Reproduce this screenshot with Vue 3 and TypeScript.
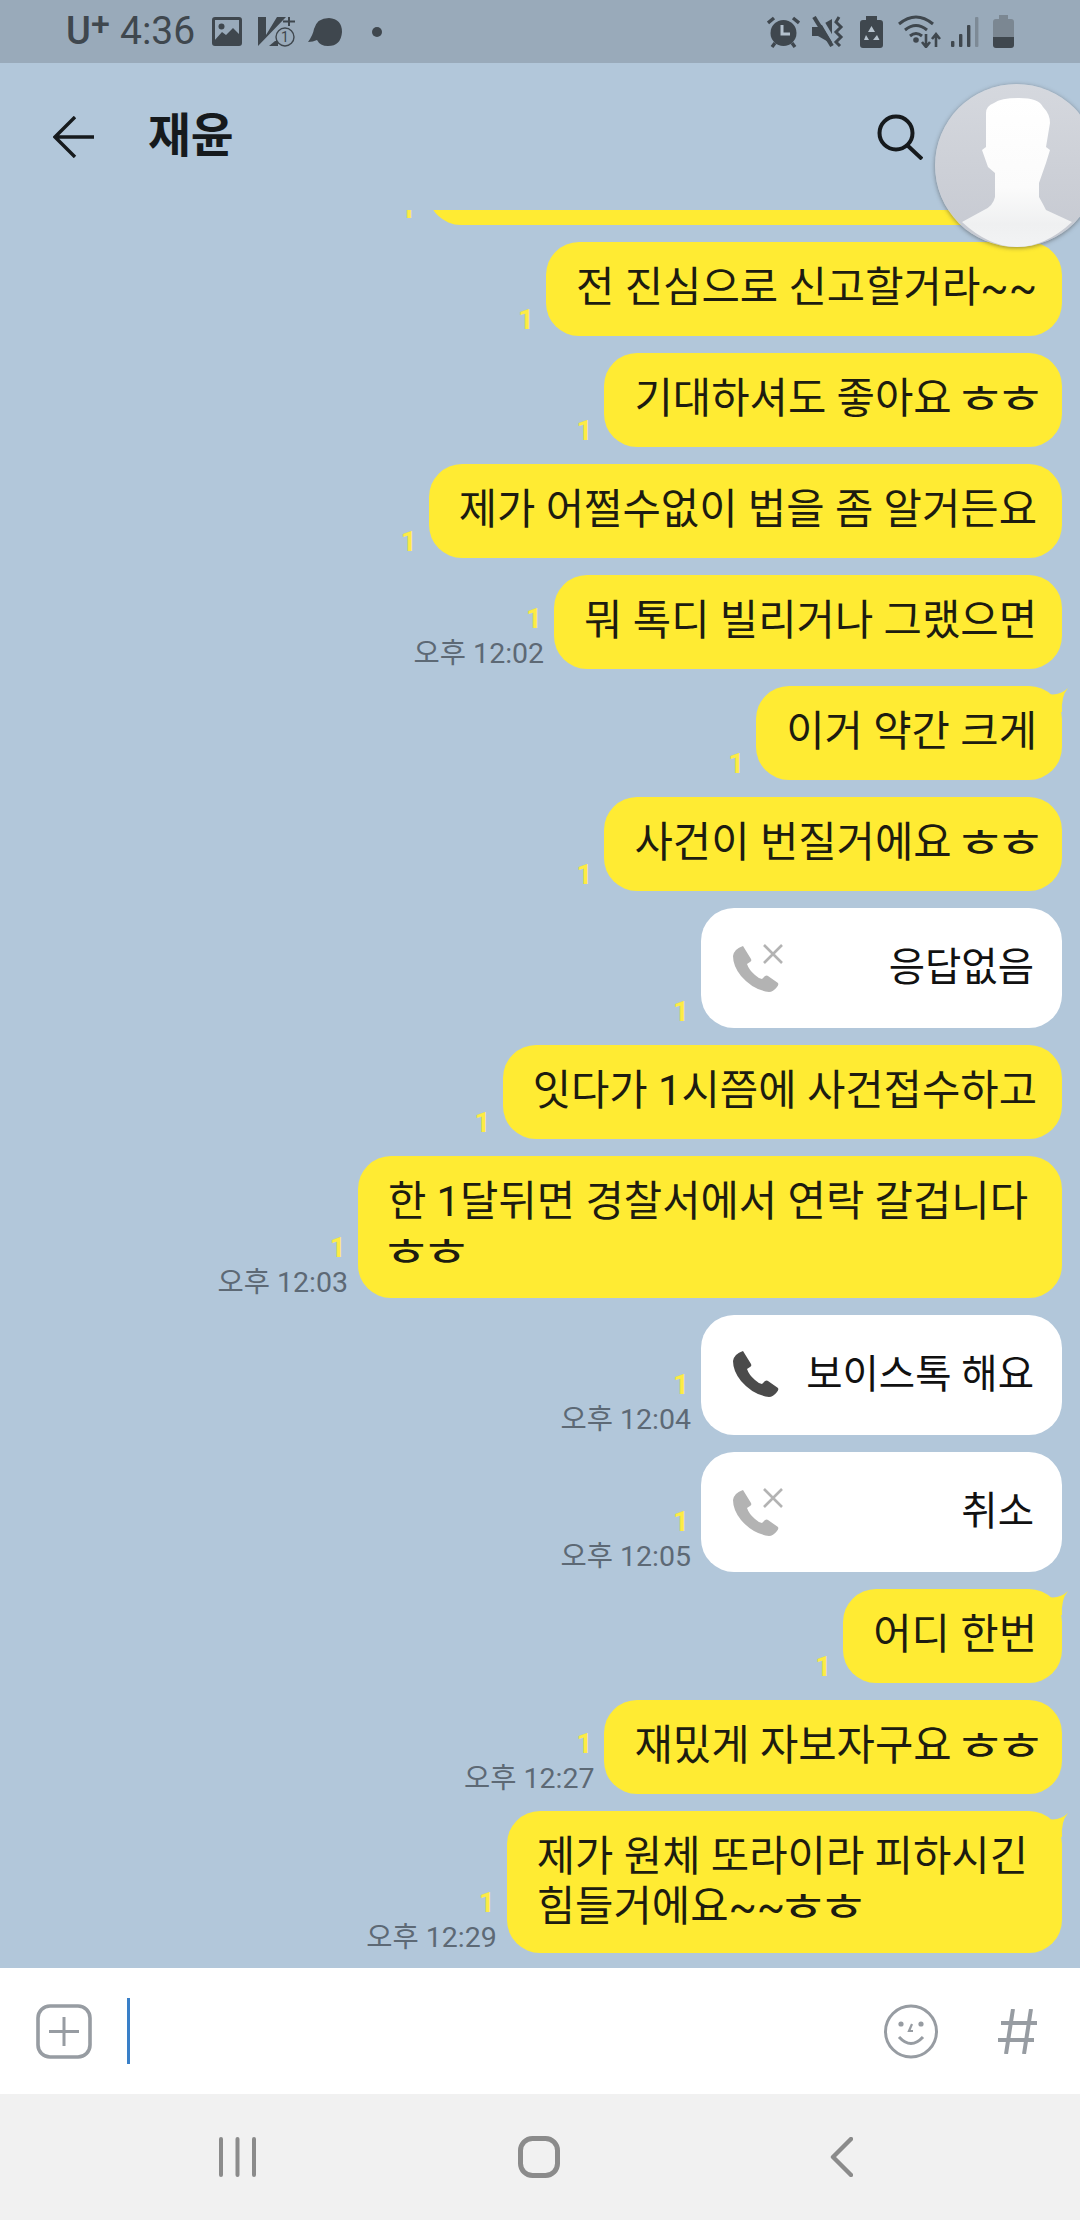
<script setup lang="ts">
interface Message {
  text: string
  kind?: 'call' | 'missed'
  time?: string
  tail?: boolean
  clipped?: boolean
}

const messages: Message[] = [
  { text: '', clipped: true },
  { text: '전 진심으로 신고할거라~~' },
  { text: '기대하셔도 좋아요 ㅎㅎ' },
  { text: '제가 어쩔수없이 법을 좀 알거든요' },
  { text: '뭐 톡디 빌리거나 그랬으면', time: '오후 12:02' },
  { text: '이거 약간 크게', tail: true },
  { text: '사건이 번질거에요 ㅎㅎ' },
  { text: '응답없음', kind: 'missed' },
  { text: '잇다가 1시쯤에 사건접수하고' },
  { text: '한 1달뒤면 경찰서에서 연락 갈겁니다\nㅎㅎ', time: '오후 12:03' },
  { text: '보이스톡 해요', kind: 'call', time: '오후 12:04' },
  { text: '취소', kind: 'missed', time: '오후 12:05' },
  { text: '어디 한번', tail: true },
  { text: '재밌게 자보자구요 ㅎㅎ', time: '오후 12:27' },
  { text: '제가 원체 또라이라 피하시긴\n힘들거에요~~ㅎㅎ', time: '오후 12:29', tail: true },
]

// the ㅎㅎ pair is flatter and wider on the phone, so it gets its own span
const splitLaugh = (text: string) => text.split(/(ㅎㅎ)/).filter(Boolean)

const phonePath =
  'M10 0 L18 13 Q19 15 17 16 L14 18 Q16 24 22 29 Q25 32 29 33 L32 30 Q34 29 35 30 L45 37 Q46 39 44 41 Q40 46 36 46 Q20 44 8 30 Q0 20 0 10 Q1 3 10 0 Z'
</script>

<template>
  <div class="page">
    <div class="status">
      <span class="carrier">U<sup>+</sup></span>
      <span class="clock">4:36</span>
      <svg class="ic-image" width="30" height="29" viewBox="0 0 30 29">
        <rect x="1.5" y="1.5" width="27" height="26" rx="1.5" fill="none" stroke="#3f474e" stroke-width="3" />
        <circle cx="9.5" cy="9.5" r="3" fill="#3f474e" />
        <path d="M2 24 L10 15 L14 18 L21 11 L28 18 V28 H2 Z" fill="#3f474e" />
      </svg>
      <svg class="ic-volte" width="37" height="30" viewBox="0 0 37 30">
        <path d="M0 0 H8 V18 L19 0 H28 L0 29 Z" fill="#3f474e" />
        <path d="M11 29 L17 24 H20 V29 Z" fill="#3f474e" />
        <path d="M31 0 V9 M25 4.5 H37" stroke="#3f474e" stroke-width="2" fill="none" />
        <circle cx="27" cy="20" r="9" fill="#99aaba" stroke="#3f474e" stroke-width="1.4" />
        <text x="27" y="25" text-anchor="middle" class="ic-num">1</text>
      </svg>
      <svg class="ic-talk" width="34" height="28" viewBox="0 0 34 28">
        <path d="M0 24 Q5 17 6 11 Q9 0 21 0 Q34 1 34 14 Q33 28 20 28 Q12 28 9 22 Q5 24 0 24 Z" fill="#3f474e" />
      </svg>
      <i class="status-dot"></i>

      <svg class="ic-alarm" width="33" height="32" viewBox="0 0 33 32">
        <circle cx="16.5" cy="17" r="13" fill="#3f474e" />
        <path d="M15 9 V18 H23" fill="none" stroke="#b4c1cd" stroke-width="3" />
        <path d="M1 7 L7 2 M32 7 L26 2 M5 31 L8 27 M28 31 L25 27" stroke="#3f474e" stroke-width="3.4" fill="none" />
      </svg>
      <svg class="ic-mute" width="32" height="31" viewBox="0 0 32 31">
        <path d="M0 11 H6 L20 3 V28 L6 20 H0 Z" fill="#3f474e" />
        <path d="M7 0 L24 29" stroke="#99aaba" stroke-width="4" />
        <path d="M2 1 L20 30" stroke="#3f474e" stroke-width="4" />
        <path d="M27 1 L24 6 L29 11 L24 16 L29 21 L24 26 L28 30" fill="none" stroke="#3f474e" stroke-width="3" />
      </svg>
      <svg class="ic-saver" width="23" height="32" viewBox="0 0 23 32">
        <path d="M6 0 H17 V4 H20 Q23 4 23 7 V29 Q23 32 20 32 H3 Q0 32 0 29 V7 Q0 4 3 4 H6 Z" fill="#3f474e" />
        <path d="M11.5 10 L15 16 H8 Z M6 19 L9 24 H4 Z M17 19 L19.5 24 H13 Z" fill="#b6c2cd" />
      </svg>
      <svg class="ic-wifi" width="43" height="33" viewBox="0 0 43 33">
        <path d="M1 9 Q18 -5 35 9 M7 15 Q18 6 29 15 M12 21 Q18 16 24 21" fill="none" stroke="#3f474e" stroke-width="3" />
        <circle cx="18" cy="25" r="2.8" fill="#3f474e" />
        <path d="M28 19 V31 M24 27 L28 32 L32 27 M38 32 V20 M34 24 L38 19 L42 24" fill="none" stroke="#3f474e" stroke-width="2.6" />
      </svg>
      <svg class="ic-signal" width="28" height="30" viewBox="0 0 28 30">
        <rect x="0" y="24" width="3.4" height="6" rx="1" fill="#3f474e" />
        <rect x="8" y="17" width="3.4" height="13" rx="1" fill="#3f474e" />
        <rect x="16" y="8" width="3.4" height="22" rx="1" fill="#3f474e" />
        <rect x="24" y="0" width="3.4" height="30" rx="1" fill="#7d8a96" />
      </svg>
      <svg class="ic-battery" width="21" height="33" viewBox="0 0 21 33">
        <path d="M6 0 H15 V4 H18 Q21 4 21 7 V22 H0 V7 Q0 4 3 4 H6 Z" fill="#7b8792" />
        <path d="M0 22 H21 V30 Q21 33 18 33 H3 Q0 33 0 30 Z" fill="#3f474e" />
      </svg>
    </div>

    <header class="header">
      <svg class="back" width="42" height="42" viewBox="0 0 42 42">
        <path d="M41 21 H2 M22 1 L2 21 L22 41" fill="none" stroke="#161a1d" stroke-width="3.4" />
      </svg>
      <h1 class="title">재윤</h1>
      <svg class="search" width="46" height="46" viewBox="0 0 46 46">
        <circle cx="19" cy="19" r="16.5" fill="none" stroke="#161a1d" stroke-width="4" />
        <path d="M30 31 L45 45" stroke="#161a1d" stroke-width="4" />
      </svg>
    </header>

    <!-- floating head over the chat -->
    <div class="avatar">
      <svg width="163" height="163" viewBox="0 0 163 163">
        <defs>
          <linearGradient id="avatarBg" x1="0" y1="0" x2="0" y2="1">
            <stop offset="0" stop-color="#d5d8de" />
            <stop offset="1" stop-color="#c6c9d1" />
          </linearGradient>
          <linearGradient id="avatarHead" x1="0" y1="0" x2="0" y2="1">
            <stop offset="0" stop-color="#ffffff" />
            <stop offset="0.6" stop-color="#fbfbfb" />
            <stop offset="0.85" stop-color="#eff0f1" />
            <stop offset="1" stop-color="#f2f3f4" />
          </linearGradient>
        </defs>
        <circle cx="81.5" cy="81.5" r="81.5" fill="url(#avatarBg)" />
        <path
          d="M59 19 Q66 14 84 14 Q104 14 108 23 Q115 30 115 39 L111 63 L115 66 L111 79 L104 99 L104 113 Q108 120 111 126 L137 138 Q110 163 82 163 Q54 163 27 138 L49 126 Q58 122 60 113 L60 89 L53 83 L47 66 L51 63 L51 29 Q51 22 59 19 Z"
          fill="url(#avatarHead)"
        />
      </svg>
    </div>

    <main class="chat">
      <div v-for="(msg, i) in messages" :key="i" class="row" :class="{ 'row-clipped': msg.clipped }">
        <div class="meta">
          <span class="receipt">1</span>
          <span v-if="msg.time" class="time">{{ msg.time }}</span>
        </div>
        <div v-if="msg.kind" class="bubble call">
          <svg class="phone" width="50" height="48" viewBox="0 0 50 48">
            <g v-if="msg.kind === 'missed'" transform="translate(0 2)">
              <path :d="phonePath" fill="#b3b3b3" />
            </g>
            <path v-if="msg.kind === 'missed'" d="M31 1 L49 19 M49 1 L31 19" stroke="#b3b3b3" stroke-width="2.6" fill="none" />
            <path v-else :d="phonePath" fill="#4b4b4b" />
          </svg>
          <span>{{ msg.text }}</span>
        </div>
        <div v-else class="bubble" :class="{ clipped: msg.clipped, wrapped: msg.text.includes('\n') }">
          <template v-for="(part, p) in splitLaugh(msg.text)" :key="p">
            <span v-if="part === 'ㅎㅎ'" class="laugh">{{ part }}</span>
            <template v-else>{{ part }}</template>
          </template>
          <svg v-if="msg.tail" class="tail" width="20" height="26" viewBox="0 0 20 26">
            <path d="M0 8 Q12 10 20 2 Q13 10 14 26 L0 26 Z" fill="#ffeb33" />
          </svg>
        </div>
      </div>
    </main>

    <div class="composer">
      <svg class="plus" width="56" height="55" viewBox="0 0 56 55">
        <rect x="2" y="2" width="52" height="51" rx="12" fill="none" stroke="#979ca2" stroke-width="3.6" />
        <path d="M28 13 V42 M13 27.5 H43" stroke="#979ca2" stroke-width="3" />
      </svg>
      <i class="cursor"></i>
      <svg class="smile" width="54" height="55" viewBox="0 0 54 55">
        <circle cx="27" cy="27.5" r="25.5" fill="none" stroke="#979ca2" stroke-width="3" />
        <circle cx="17" cy="20" r="2.6" fill="#979ca2" />
        <circle cx="37" cy="20" r="2.6" fill="#979ca2" />
        <path d="M28 20 L25 27 H29" fill="none" stroke="#979ca2" stroke-width="2.2" />
        <path d="M15 33 Q27 46 39 33" fill="none" stroke="#979ca2" stroke-width="3" />
      </svg>
      <svg class="hash" width="39" height="45" viewBox="0 0 39 45">
        <path d="M15 0 L8 45 M33 0 L26 45 M3 14 H39 M0 31 H36" fill="none" stroke="#979ca2" stroke-width="4" />
      </svg>
    </div>

    <nav class="nav">
      <svg width="37" height="40" viewBox="0 0 37 40">
        <path d="M2 2 V38 M18.5 2 V38 M35 2 V38" stroke="#8b8b8b" stroke-width="4" stroke-linecap="round" />
      </svg>
      <svg width="42" height="42" viewBox="0 0 42 42">
        <rect x="2.5" y="2.5" width="37" height="37" rx="12" fill="none" stroke="#8b8b8b" stroke-width="5" />
      </svg>
      <svg class="nav-back" width="23" height="40" viewBox="0 0 23 40">
        <path d="M21 2 L3 20 L21 38" fill="none" stroke="#8b8b8b" stroke-width="4.4" stroke-linecap="round" stroke-linejoin="round" />
      </svg>
    </nav>
  </div>
</template>

<style scoped>
* {
  box-sizing: border-box;
}

.page {
  position: relative;
  display: flex;
  flex-direction: column;
  width: 1080px;
  height: 2220px;
  overflow: hidden;
  background: #b2c7da;
  font-family: Roboto, "Noto Sans CJK KR", sans-serif;
}

.status {
  display: flex;
  align-items: center;
  flex: none;
  height: 63px;
  padding: 0 66px;
  background: #99aaba;
  color: #3f474e;
}

.status svg {
  flex: none;
}

.carrier {
  width: 41px;
  font-size: 38px;
  font-weight: 500;
  line-height: 63px;
  white-space: nowrap;
}

.carrier sup {
  font-size: 34px;
  line-height: 0;
  vertical-align: 9px;
}

.clock {
  width: 73px;
  margin-left: 13px;
  font-size: 39px;
  line-height: 63px;
}

.ic-image {
  margin-left: 19px;
}

.ic-volte {
  margin-left: 16px;
}

.ic-num {
  font-family: Roboto, sans-serif;
  font-size: 14px;
  fill: #3f474e;
}

.ic-talk {
  margin-left: 13px;
}

.status-dot {
  width: 10px;
  height: 10px;
  margin-left: 30px;
  border-radius: 50%;
  background: #3f474e;
}

.ic-alarm {
  margin-left: auto;
}

.ic-mute {
  margin-left: 12px;
}

.ic-saver {
  margin-left: 16px;
}

.ic-wifi {
  margin-left: 15px;
}

.ic-signal {
  margin-left: 10px;
}

.ic-battery {
  margin-left: 14px;
}

.header {
  display: flex;
  align-items: center;
  flex: none;
  height: 147px;
  padding: 0 157px 0 53px;
}

.title {
  margin: 0 0 0 53px;
  color: #161a1d;
  font-size: 46.5px;
  font-weight: 700;
  line-height: 1;
}

.search {
  margin-left: auto;
}

.avatar {
  position: absolute;
  top: 84px;
  left: 935px;
  z-index: 2;
  width: 163px;
  height: 163px;
  border-radius: 50%;
  box-shadow: 0 1px 4px rgba(60, 60, 60, 0.55);
}

.avatar svg {
  display: block;
}

.chat {
  display: flex;
  flex-direction: column;
  flex: 1;
  gap: 17px;
  min-height: 0;
  overflow: hidden;
  padding-right: 18px;
}

.row {
  display: flex;
  align-items: flex-end;
  justify-content: flex-end;
  flex: none;
  gap: 10px;
}

.row-clipped {
  margin-top: -79px;
}

.meta {
  display: flex;
  flex-direction: column;
  align-items: flex-end;
  padding-bottom: 1px;
}

.receipt {
  margin: 0 2px 5px 0;
  color: #fdeb44;
  font-size: 28px;
  font-weight: 700;
  line-height: 20px;
}

.time {
  margin-top: 6px;
  color: #5d6975;
  font-size: 28.5px;
  line-height: 28px;
  white-space: nowrap;
}

.bubble {
  position: relative;
  min-height: 94px;
  padding: 21px 25px 21px 30px;
  border-radius: 33px;
  background: #ffeb33;
  color: #1d1c10;
  font-size: 41.7px;
  line-height: 50px;
  white-space: pre-line;
}

.wrapped {
  padding-right: 34px;
  padding-left: 30px;
}

.laugh {
  display: inline-block;
  width: 75px;
  letter-spacing: -8.4px;
  white-space: nowrap;
  transform: translateX(-8px) scale(1.35, 0.95);
  transform-origin: 0 60%;
}

.clipped {
  width: 634px;
}

.tail {
  position: absolute;
  top: 0;
  right: -6px;
}

.call {
  display: flex;
  align-items: center;
  justify-content: space-between;
  width: 361px;
  height: 120px;
  padding: 0 28px 0 32px;
  background: #fff;
  color: #111;
  font-size: 39.5px;
}

.composer {
  display: flex;
  align-items: center;
  flex: none;
  height: 126px;
  padding: 0 43px 0 36px;
  background: #fff;
}

.cursor {
  width: 3px;
  height: 66px;
  margin-left: 35px;
  background: #3a80c8;
}

.smile {
  margin-left: auto;
}

.hash {
  margin-left: 60px;
}

.nav {
  display: flex;
  align-items: center;
  flex: none;
  gap: 262px;
  height: 126px;
  padding-left: 219px;
  background: #f1f1f1;
}

.nav-back {
  margin-left: 8px;
}
</style>

<style>
html,
body {
  margin: 0;
  background: #b2c7da;
}
</style>
